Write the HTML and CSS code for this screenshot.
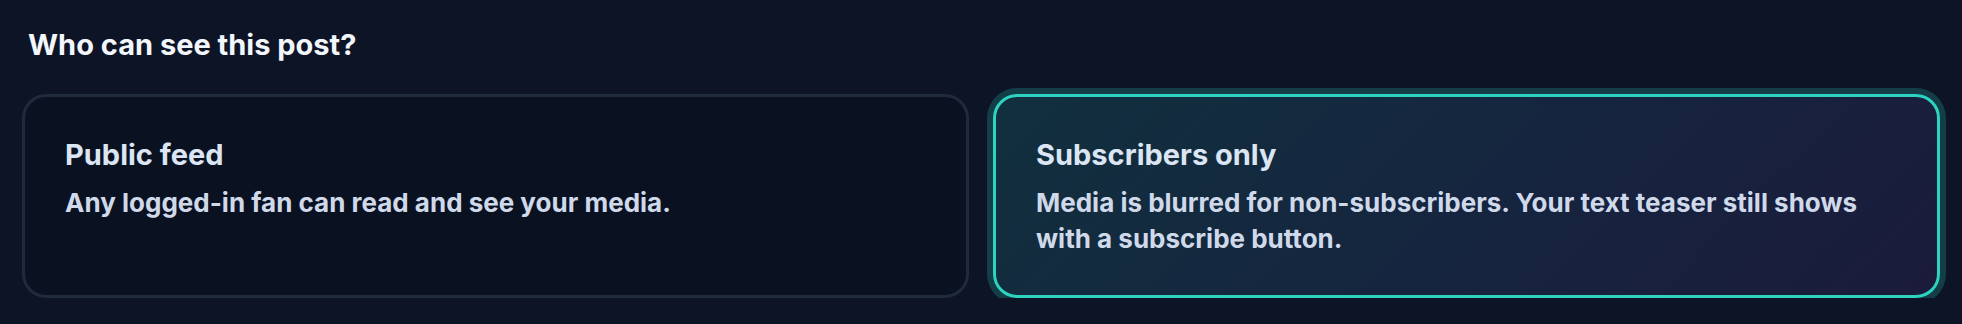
FILE: index.html
```html
<!DOCTYPE html>
<html lang="en">
<head>
    <meta charset="UTF-8">
    <meta name="viewport" content="width=device-width, initial-scale=1.0">
    <title>Post visibility</title>
    <link rel="stylesheet" href="styles.css">
</head>
<body>
    <div class="visibility">
        <h2 class="label">Who can see this post?</h2>
        <div class="options">
            <div class="option">
                <div class="option-title">Public feed</div>
                <div class="option-desc">Any logged-in fan can read and see your media.</div>
            </div>
            <div class="option selected">
                <div class="option-title">Subscribers only</div>
                <div class="option-desc">Media is blurred for non-subscribers. Your text teaser still shows with a subscribe button.</div>
            </div>
        </div>
    </div>
</body>
</html>
```

FILE: styles.css
```css
body, html {
    margin: 0;
    background-color: #0c1426;
    font-family: Inter, "Noto Sans", sans-serif;
}

.visibility {
    padding: 27px 22px 0 22px;
}

.label {
    margin: 0 0 31px 6px;
    font-size: 29px;
    line-height: 36px;
    font-weight: 700;
    color: #f3f6fb;
}

.options {
    display: grid;
    grid-template-columns: 1fr 1fr;
    gap: 24px;
}

.option {
    height: 204px;
    box-sizing: border-box;
    padding: 40px;
    border: 3px solid #1f2a3b;
    border-radius: 24px;
    background-color: #0a1222;
}

.option-title {
    font-size: 29px;
    line-height: 36px;
    font-weight: 700;
    color: #dce5f4;
    margin-bottom: 12px;
}

.option-desc {
    font-size: 26px;
    line-height: 36px;
    font-weight: 700;
    color: #cfd9ea;
}

.selected {
    border-color: #2ed3bf;
    background: linear-gradient(135deg, #11303e 0%, #15253f 50%, #1b1b3c 100%);
    box-shadow: 0 0 0 6px rgba(45, 212, 191, 0.22);
}
```
